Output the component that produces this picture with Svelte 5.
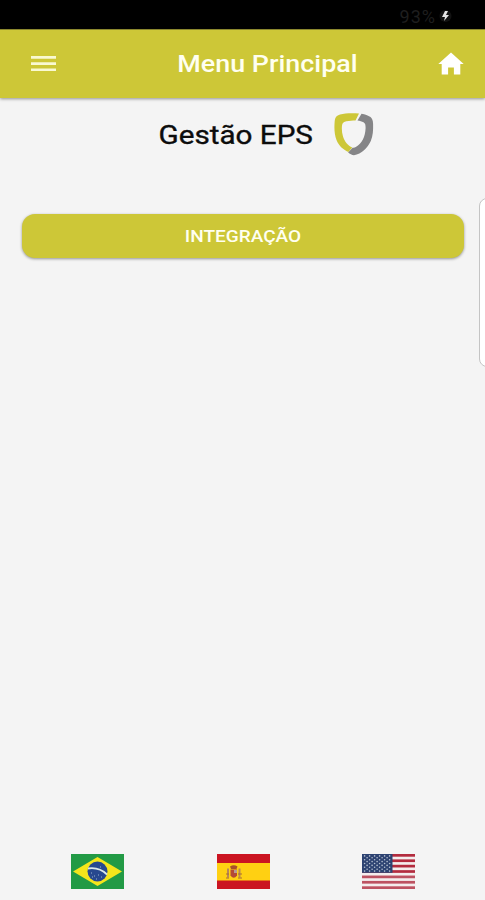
<script lang="ts">
  // Main menu screen: status bar, toolbar, module list and language picker.
  const modules = ['INTEGRAÇÃO'];
  const battery = '93%';

  // Canton stars, staggered row by row.
  const stars = Array.from({ length: 9 }, (_, row) =>
    Array.from({ length: row % 2 ? 5 : 6 }, (_, col) => ({
      x: 2.6 + col * 5 + (row % 2 ? 2.5 : 0),
      y: 1.9 + row * 1.9,
    })),
  ).flat();
</script>

<div class="screen">
  <div class="status">
    <span>{battery}</span>
    <svg width="13" height="14" viewBox="0 0 13 14">
      <circle cx="6.5" cy="7" r="6" fill="#121212" />
      <path d="M6 2 3 8h3l-1 4 5-6H7l2-4z" fill="#e4e4e4" />
    </svg>
  </div>

  <header class="toolbar">
    <button class="icon menu" aria-label="Menu">
      <svg width="26" height="18" viewBox="0 0 26 18">
        <path d="M0 1h25v2.7H0zM0 7.2h25v2.7H0zM0 13.4h25v2.7H0z" fill="#f9f9d2" />
      </svg>
    </button>
    <h1><span>Menu Principal</span></h1>
    <button class="icon home" aria-label="Home">
      <svg width="26" height="23" viewBox="0 0 26 23">
        <path d="M13 .5.3 12h3.4v10.4h6.4v-7h5.8v7h6.4V12h3.4z" fill="#fff" />
      </svg>
    </button>
  </header>

  <main>
    <div class="brand">
      <h2><span>Gestão EPS</span></h2>
      <svg width="40" height="43" viewBox="0 0 40 43">
        <path
          d="M25 .4C17-.2 11 .2 6 1.5 2.500 2.600.9 4.500.7 8 .1 15 .3 21 2.500 27 4.500 32.500 9 36.500 14.300 39l4-4.500C14 32.500 10.500 28.500 9 23.500c-1.200-4-1.400-8-.9-11.500.4-2.300 1.900-3.200 4.300-3.700 3-.5 6.300-.7 9.100-.7z"
          fill="#cdc737"
        />
        <path
          d="M27.500.7c3.700.6 6.500 1.700 9 3.300 1.700 1.300 2.500 3.500 2.600 7 .1 6 0 11.500-2.300 17-3.300 7.200-9.200 12.700-16.800 14.300-2-.6-4.300-1.600-5.900-2.900l4.500-4.700c1.200.3 2.200 0 3.200-.6 6.300-3.600 9.400-10.100 9.800-19.100 0-3-.3-4.700-2.100-5.700-1.600-.9-3.700-1.500-6-1.900z"
          fill="#858587"
        />
      </svg>
    </div>

    <nav>
      {#each modules as name}
        <button class="module"><span>{name}</span></button>
      {/each}
    </nav>
  </main>

  <footer>
    <svg width="53" height="35" viewBox="0 0 53 35">
      <path d="M0 0h53v35H0z" fill="#229a45" />
      <path d="M26.5 3 51 17.5 26.5 32 2 17.5z" fill="#f5e51b" />
      <circle cx="26.5" cy="17.5" r="10" fill="#27488f" />
      <path d="M17 14.5c7-1 14 1 19 6" fill="none" stroke="#dce8e8" stroke-width="1.8" />
      <path
        d="M20 19h1M23 22h1M27 21h1M30 23h1M25 25h1M29 13h1M21 23h1"
        stroke="#9bb4cf"
        stroke-width="1"
      />
    </svg>

    <svg width="53" height="35" viewBox="0 0 53 35">
      <path d="M0 0h53v35H0z" fill="#cb1421" />
      <path d="M0 9h53v17.5H0z" fill="#ffd012" />
      <path d="M10 14.5h2v9h-2zM21.5 14.5h2v9h-2z" fill="#b98757" />
      <path d="M13.5 15.5h6.5v6q-3.2 4.5-6.5 0z" fill="#b44a35" />
      <path d="M13 12.5q3.7-2.5 7.5 0l-1 2.5h-5.5z" fill="#a9502a" />
      <path d="M17 16h3v3h-3z" fill="#b89992" />
      <path d="M9 20h3M21 20h4M9 24h3M21 24h4" stroke="#a86d35" stroke-width="1" />
    </svg>

    <svg width="53" height="35" viewBox="0 0 53 35">
      <path d="M0 0h53v35H0z" fill="#f4eded" />
      {#each Array(7) as _, i}
        <rect y={i * 5.385} width="53" height="2.7" fill={i < 4 ? '#b32b3e' : '#bd5261'} />
      {/each}
      <path d="M0 0h30.5v18.8H0z" fill="#2d4372" />
      {#each stars as star}
        <circle cx={star.x} cy={star.y} r=".8" fill="#b7c1d0" />
      {/each}
    </svg>
  </footer>

  <div class="edge-handle"></div>
</div>

<style>
  :global(body) {
    margin: 0;
  }

  .screen {
    position: relative;
    display: flex;
    flex-direction: column;
    height: 900px;
    overflow: hidden;
    background: #f4f4f4;
    font-family: Roboto, sans-serif;
  }

  .status {
    display: flex;
    align-items: center;
    justify-content: flex-end;
    gap: 3px;
    box-sizing: border-box;
    height: 29px;
    padding: 3px 33px 0 0;
    background: #000;
    color: #1e1e1e;
    font-size: 18px;
    letter-spacing: 1px;
  }

  svg {
    display: block;
  }

  button {
    border: 0;
    padding: 0;
    font: inherit;
    cursor: pointer;
  }

  .toolbar {
    z-index: 1;
    display: flex;
    align-items: center;
    justify-content: space-between;
    box-sizing: border-box;
    height: 69px;
    padding: 0 21px 0 31px;
    border-top: 1px solid #8b872d;
    background: #cdc737;
    box-shadow: 0 1px 3px rgba(0, 0, 0, 0.4);
  }

  .icon {
    background: none;
  }

  .home {
    margin-top: -1px;
  }

  h1,
  h2 {
    margin: 0;
    font-weight: 500;
    white-space: nowrap;
  }

  h1 {
    margin-left: 39px;
    color: #fffff0;
    font-size: 24px;
  }

  /* Wide lettering on every label. */
  h1 span,
  h2 span,
  .module span {
    display: inline-block;
    transform: scaleX(1.12);
  }

  main {
    flex: 1;
  }

  .brand {
    display: flex;
    align-items: center;
    justify-content: space-between;
    height: 43px;
    padding: 15px 111px 0 168px;
  }

  h2 {
    color: #0c0c0c;
    font-size: 26px;
    font-weight: 400;
    -webkit-text-stroke: 0.35px #0c0c0c;
  }

  h2 span {
    transform: scaleX(1.14);
  }

  nav {
    padding: 58px 21px 0 22px;
  }

  .module {
    display: block;
    width: 100%;
    height: 44px;
    border-radius: 13px;
    background: #cdc737;
    box-shadow: 0 1px 3px rgba(0, 0, 0, 0.4);
    color: #fffff0;
    font-size: 17px;
    font-weight: 500;
  }

  footer {
    display: flex;
    justify-content: space-between;
    padding: 0 70px 11px 71px;
  }

  .edge-handle {
    position: absolute;
    top: 198px;
    right: -14px;
    box-sizing: border-box;
    width: 20px;
    height: 169px;
    border: 1px solid #c4c4c4;
    border-radius: 8px;
    background: #fff;
  }
</style>
